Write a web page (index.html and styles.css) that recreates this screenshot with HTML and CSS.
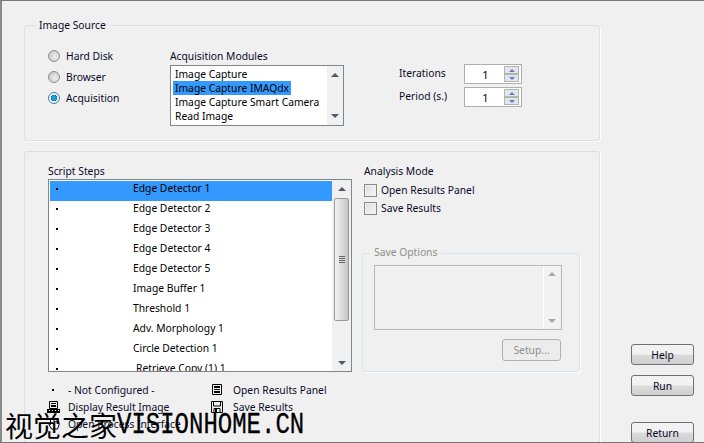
FILE: index.html
```html
<!DOCTYPE html>
<html lang="en">
<head>
  <meta charset="UTF-8">
  <title>Image Source</title>
  <link rel="stylesheet" href="styles.css">
</head>
<body>
  <div class="window">
    <main class="panels">
      <fieldset class="group source">
        <legend>Image Source</legend>
        <div class="radios">
          <label class="option"><span class="radio"></span>Hard Disk</label>
          <label class="option"><span class="radio"></span>Browser</label>
          <label class="option"><span class="radio on"></span>Acquisition</label>
        </div>
        <div class="modules">
          <div class="caption">Acquisition Modules</div>
          <div class="listbox">
            <ul>
              <li>Image Capture</li>
              <li><span class="picked">Image Capture IMAQdx</span></li>
              <li>Image Capture Smart Camera</li>
              <li>Read Image</li>
            </ul>
            <div class="mini-scroll">
              <span class="arrow up"></span>
              <span class="arrow down"></span>
            </div>
          </div>
        </div>
        <div class="spinners">
          <div class="spin-row">
            <span class="spin-label">Iterations</span>
            <div class="spinbox">
              <span class="spin-value">1</span>
              <div class="spin-btns"><span class="spin-btn"><i class="tri up"></i></span><span class="spin-btn"><i class="tri down"></i></span></div>
            </div>
          </div>
          <div class="spin-row">
            <span class="spin-label">Period (s.)</span>
            <div class="spinbox">
              <span class="spin-value">1</span>
              <div class="spin-btns"><span class="spin-btn"><i class="tri up"></i></span><span class="spin-btn"><i class="tri down"></i></span></div>
            </div>
          </div>
        </div>
      </fieldset>

      <section class="group script">
        <div class="script-left">
          <div class="caption">Script Steps</div>
          <div class="steps">
            <ul class="step-list">
              <li class="selected"><i class="dot"></i><span>Edge Detector 1</span></li>
              <li><i class="dot"></i><span>Edge Detector 2</span></li>
              <li><i class="dot"></i><span>Edge Detector 3</span></li>
              <li><i class="dot"></i><span>Edge Detector 4</span></li>
              <li><i class="dot"></i><span>Edge Detector 5</span></li>
              <li><i class="dot"></i><span>Image Buffer 1</span></li>
              <li><i class="dot"></i><span>Threshold 1</span></li>
              <li><i class="dot"></i><span>Adv. Morphology 1</span></li>
              <li><i class="dot"></i><span>Circle Detection 1</span></li>
              <li><i class="dot"></i><span class="nudge">Retrieve Copy (1) 1</span></li>
            </ul>
            <div class="scrollbar">
              <span class="arrow up"></span>
              <div class="thumb"><i></i><i></i><i></i><i></i></div>
              <span class="arrow down"></span>
            </div>
          </div>
          <div class="legend-grid">
            <div class="key"><span class="key-icon"><i class="dot"></i></span><span>- Not Configured -</span></div>
            <div class="key right"><span class="key-icon">
              <svg width="10" height="11" viewBox="0 0 10 11"><path d="M0.5 0.5h9v10h-9z" fill="none" stroke="#000"/><path d="M2 2h6v2H2zM2 5h6v1H2zM2 7h6v2H2z" fill="#000"/></svg>
            </span><span>Open Results Panel</span></div>
            <div class="key"><span class="key-icon">
              <svg width="13" height="12" viewBox="0 0 13 12"><path d="M2.5 0.5h8v7h-8z" fill="none" stroke="#000"/><path d="M4 2h5v1H4zM4 4h5v2H4z" fill="#000"/><path d="M0 8h13v4H0z" fill="#000"/><path d="M2 9h1v1H2zM5 9h1v1H5zM8 9h1v1H8zM11 9h1v1h-1z" fill="#fff"/></svg>
            </span><span>Display Result Image</span></div>
            <div class="key right"><span class="key-icon">
              <svg width="12" height="12" viewBox="0 0 12 12"><path d="M0.5 0.5h11v11h-11z" fill="none" stroke="#000"/><path d="M2.5 1v4h7V1M3 11V7.500h6V11" fill="none" stroke="#000"/><path d="M4 8h2v3H4z" fill="#000"/></svg>
            </span><span>Save Results</span></div>
            <div class="key"><span class="key-icon">
              <svg width="13" height="13" viewBox="0 0 13 13"><path d="M3.500 1.500v6l-2-1 3 5.500h6l1.500-4v-3l-2-.5-1 .5-1-.5-1 .5v-3.500z" fill="#fff" stroke="#000"/></svg>
            </span><span>Open Process Interface</span></div>
          </div>
        </div>
        <div class="script-right">
          <div class="caption">Analysis Mode</div>
          <label class="check first"><span class="box"></span>Open Results Panel</label>
          <label class="check"><span class="box"></span>Save Results</label>
          <fieldset class="save-options">
            <legend>Save Options</legend>
            <div class="save-box">
              <div class="mini-scroll muted">
                <span class="arrow up"></span>
                <span class="arrow down"></span>
              </div>
            </div>
            <button class="btn setup" disabled>Setup...</button>
          </fieldset>
        </div>
      </section>
    </main>
    <aside class="actions">
      <button class="btn">Help</button>
      <button class="btn">Run</button>
      <button class="btn return">Return</button>
    </aside>
  </div>
  <div class="watermark"><span class="wm-cjk">视觉之家</span><span class="wm-latin">VISIONHOME.CN</span></div>
</body>
</html>
```

FILE: styles.css
```css
html, body {
  margin: 0;
  height: 443px;
  overflow: hidden;
}
body {
  font-family: "Noto Sans", sans-serif;
  font-size: 10.3px;
  color: #0a0a28;
  background-color: #f0f0f0;
  position: relative;
}
ul {
  list-style: none;
  margin: 0;
  padding: 0;
}
.window {
  box-sizing: border-box;
  width: 704px;
  height: 443px;
  border-top: 1px solid #777;
  border-left: 2px solid #8a8a8a;
  border-bottom: 1px solid #777;
  display: flex;
  overflow: hidden;
}
.panels {
  margin-left: 22px;
  padding-top: 24px;
  width: 576px;
  flex: none;
}
.group {
  border: 1px solid #d9dfe4;
  box-shadow: 1px 1px 0 #fff;
  border-radius: 3px;
  margin: 0;
  min-inline-size: 0;
}
.source {
  box-sizing: border-box;
  height: 116px;
  padding: 0;
  display: flex;
  position: relative;
}
.source legend {
  margin-left: 10px;
  padding: 0 5px 0 4px;
  line-height: 14px;
  position: absolute;
  top: -8px;
  background: #f0f0f0;
}
.radios {
  margin-left: 23px;
  padding-top: 19px;
  width: 122px;
}
.option {
  display: flex;
  align-items: center;
  gap: 6px;
  height: 21px;
}
.radio {
  box-sizing: border-box;
  width: 12px;
  height: 12px;
  border-radius: 50%;
  border: 1px solid #8e8e8e;
  background: radial-gradient(circle at 60% 60%, #eeeeee, #c0c0c0);
}
.radio.on {
  border-color: #4a7d9c;
  background: radial-gradient(circle, #1a9be0 0 2.5px, #0c5f96 3px, #fff 3.6px, #d8e4ec);
}
.caption {
  line-height: 14px;
}
.modules {
  padding-top: 23px;
  width: 229px;
}
.listbox {
  box-sizing: border-box;
  margin-top: 2px;
  width: 174px;
  height: 61px;
  border: 1px solid #7f8589;
  background: #fff;
  display: flex;
  color: #000;
}
.listbox ul {
  flex: 1;
  min-width: 0;
  padding: 1px 3px 0 2px;
  white-space: nowrap;
}
.listbox li {
  line-height: 14px;
  padding-left: 2px;
}
.picked {
  background: #3399ff;
  display: block;
  margin-left: -2px;
  padding-left: 2px;
  width: 116px;
}
.mini-scroll {
  width: 17px;
  background: #f0f0f0;
  border-left: 1px solid #fff;
  display: flex;
  flex-direction: column;
  justify-content: space-between;
  align-items: center;
  padding: 7px 0;
  box-sizing: border-box;
  flex: none;
}
.arrow {
  width: 0;
  height: 0;
  border-left: 4px solid transparent;
  border-right: 4px solid transparent;
}
.arrow.up {
  border-bottom: 4px solid #505a64;
}
.arrow.down {
  border-top: 4px solid #505a64;
}
.spinners {
  padding-top: 38px;
}
.spin-row {
  display: flex;
  align-items: center;
  height: 20px;
  margin-bottom: 3px;
}
.spin-label {
  width: 65px;
  margin-top: -3px;
}
.spinbox {
  box-sizing: border-box;
  width: 58px;
  height: 20px;
  border: 1px solid #aeaeae;
  background: #fff;
  display: flex;
  align-items: center;
  color: #000;
}
.spin-value {
  flex: 1;
  text-align: center;
  font-size: 11px;
  padding-left: 2px;
}
.spin-btns {
  width: 13px;
  margin-right: 2px;
  border: 1px solid #b4b4b4;
}
.spin-btn {
  display: flex;
  justify-content: center;
  align-items: center;
  height: 6px;
  background: #e4e6ee;
}
.spin-btn:first-child {
  border-bottom: 2px solid #b4b4b4;
}
.tri {
  width: 0;
  height: 0;
  border-left: 3px solid transparent;
  border-right: 3px solid transparent;
}
.tri.up {
  border-bottom: 3px solid #6a78c0;
}
.tri.down {
  border-top: 3px solid #6a78c0;
}
.script {
  box-sizing: border-box;
  height: 320px;
  margin-top: 10px;
  display: flex;
}
.script-left {
  margin-left: 23px;
  padding-top: 12px;
  width: 316px;
}
.steps {
  box-sizing: border-box;
  margin-top: 1px;
  width: 304px;
  height: 193px;
  border: 1px solid #7f8589;
  background: #fff;
  display: flex;
  color: #000;
  overflow: hidden;
}
.step-list {
  flex: 1;
  padding: 1px 0 0 1px;
  overflow: hidden;
}
.step-list li {
  height: 20px;
  line-height: 14px;
  display: flex;
  align-items: flex-start;
}
.step-list li.selected {
  background: #3399ff;
}
.step-list li span {
  margin-left: 75px;
}
.step-list li span.nudge {
  margin-left: 78px;
}
.dot {
  width: 2px;
  height: 2px;
  background: #000;
  margin: 7px 0 0 6px;
  flex: none;
}
.scrollbar {
  width: 19px;
  background: #f0f0f0;
  display: flex;
  flex-direction: column;
  align-items: center;
  flex: none;
}
.scrollbar .arrow.up {
  margin-top: 7px;
}
.scrollbar .arrow.down {
  margin-top: auto;
  margin-bottom: 6px;
}
.thumb {
  box-sizing: border-box;
  width: 15px;
  height: 123px;
  margin-top: 7px;
  border: 1px solid #9a9a9a;
  border-radius: 2px;
  background: linear-gradient(to right, #f2f2f2, #dcdcdc 50%, #c4c4c4);
  display: flex;
  flex-direction: column;
  justify-content: center;
  align-items: center;
  gap: 1px;
}
.thumb i {
  width: 6px;
  height: 1px;
  background: #666;
}
.legend-grid {
  margin: 9px 0 0 -2px;
  display: grid;
  grid-template-columns: 164px 1fr;
  grid-auto-rows: 17px;
}
.key {
  display: flex;
  align-items: center;
  gap: 8px;
}
.key-icon {
  width: 14px;
  display: flex;
  justify-content: center;
}
.key-icon .dot {
  margin: 0;
}
.key.right {
  gap: 9px;
}
.script-right {
  padding-top: 12px;
}
.check {
  display: flex;
  align-items: center;
  gap: 4px;
  height: 18px;
}
.check.first {
  margin-top: 3px;
}
.box {
  box-sizing: border-box;
  width: 13px;
  height: 13px;
  border: 1px solid #8a8a8a;
  background: linear-gradient(135deg, #dcdcdc, #f8f8f8);
  box-shadow: inset 0 0 0 1px #f0f0f0;
}
.save-options {
  box-sizing: border-box;
  width: 218px;
  height: 119px;
  margin: 36px 0 0 -2px;
  padding: 0;
  border: 1px solid #d9e4ee;
  border-radius: 3px;
  box-shadow: 1px 1px 0 #fff;
  position: relative;
  color: #8e8e8e;
  min-inline-size: 0;
}
.save-options legend {
  position: absolute;
  top: -9px;
  left: 7px;
  padding: 0 4px;
  line-height: 14px;
  background: #f0f0f0;
}
.save-box {
  box-sizing: border-box;
  width: 188px;
  height: 65px;
  margin: 11px 0 0 11px;
  border: 1px solid #b8b8b8;
  display: flex;
  justify-content: flex-end;
}
.mini-scroll.muted {
  background: #f2f2f2;
  margin-right: 1px;
  padding: 6px 0;
}
.mini-scroll.muted .arrow.up {
  border-bottom-color: #a8a8a8;
}
.mini-scroll.muted .arrow.down {
  border-top-color: #a8a8a8;
}
.btn {
  box-sizing: border-box;
  display: block;
  width: 63px;
  height: 21px;
  padding: 0;
  font-family: inherit;
  font-size: 10.3px;
  color: #0a0a28;
  border: 1px solid #707070;
  border-radius: 3px;
  background: linear-gradient(to bottom, #f2f2f2 0 48%, #dcdcdc 52%, #cfcfcf);
}
.setup {
  width: 59px;
  height: 22px;
  margin: 9px 0 0 139px;
  color: #8e8e8e;
  border-color: #b0b0b0;
  background: #ececec;
}
.actions {
  margin-left: 31px;
  padding-top: 343px;
}
.actions .btn {
  margin-bottom: 10px;
}
.actions .return {
  margin-top: 26px;
}
.watermark {
  position: absolute;
  left: 5px;
  top: 406px;
  color: #000;
  display: flex;
  align-items: center;
  white-space: nowrap;
  line-height: 36px;
}
.wm-cjk {
  font-family: "Noto Sans CJK SC", sans-serif;
  font-size: 28px;
}
.wm-latin {
  font-family: "Liberation Mono", monospace;
  font-size: 30px;
  padding-top: 1px;
  display: inline-block;
  transform: scaleX(0.8);
  transform-origin: left center;
  -webkit-text-stroke: 0.3px #000;
}
```
